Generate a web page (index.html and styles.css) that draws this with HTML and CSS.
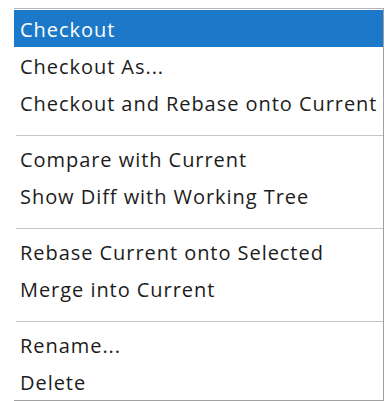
FILE: index.html
```html
<!DOCTYPE html>
<html lang="en">
<head>
    <meta charset="UTF-8">
    <title>Branch Menu</title>
    <link rel="stylesheet" href="styles.css">
</head>
<body>
    <!-- Branch context menu -->
    <div class="menu">
        <div class="menu-item active">Checkout</div>
        <div class="menu-item">Checkout As...</div>
        <div class="menu-item">Checkout and Rebase onto Current</div>
        <div class="separator"></div>
        <div class="menu-item">Compare with Current</div>
        <div class="menu-item">Show Diff with Working Tree</div>
        <div class="separator"></div>
        <div class="menu-item">Rebase Current onto Selected</div>
        <div class="menu-item">Merge into Current</div>
        <div class="separator"></div>
        <div class="menu-item">Rename...</div>
        <div class="menu-item">Delete</div>
    </div>
</body>
</html>
```

FILE: styles.css
```css
/* Basic Styles */
body {
    margin: 0;
    padding: 8px 0 0 14px;
    background-color: #fff;
    font-family: "Open Sans", "Noto Sans", sans-serif;
}

.menu {
    width: 369px;
    padding-top: 1px;
    background-color: #fff;
    border-top: 1px solid #b4b4b4;
    border-right: 1px solid #a0a0a0;
    border-bottom: 1px solid #a0a0a0;
}

/* Items */
.menu-item {
    height: 37px;
    padding: 1px 0 0 6px;
    box-sizing: border-box;
    display: flex;
    align-items: center;
    font-size: 20px;
    letter-spacing: 0.95px;
    color: #1c1c1c;
    white-space: nowrap;
}

.menu-item.active {
    background-color: #1c78c8;
    color: #fff;
}

/* Separators */
.separator {
    height: 1px;
    margin: 14px 0 4px 2px;
    background-color: #c4c4c4;
}
```
